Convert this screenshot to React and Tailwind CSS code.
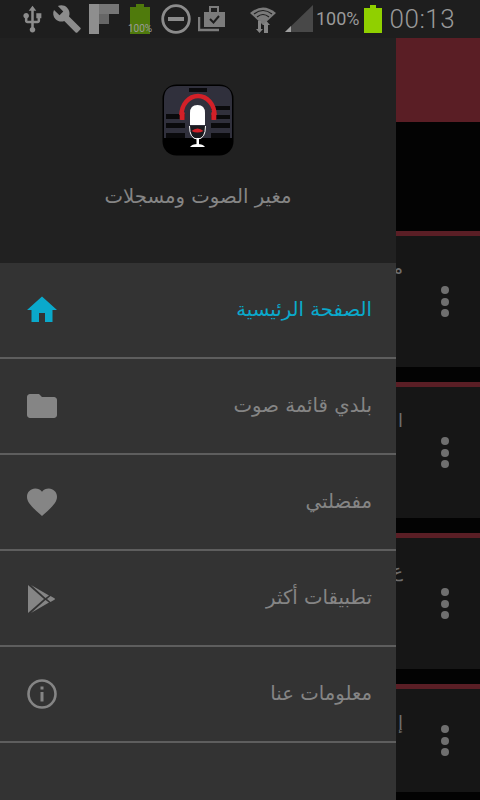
import React from "react";

const menuItems = [
  { label: "الصفحة الرئيسية", icon: "home", active: true },
  { label: "بلدي قائمة صوت", icon: "folder" },
  { label: "مفضلتي", icon: "heart" },
  { label: "تطبيقات أكثر", icon: "play" },
  { label: "معلومات عنا", icon: "info" },
];

const cards = [
  { glyph: "م", textClass: "mt-[19px]", height: "h-[131px]" },
  { glyph: "ا", textClass: "mt-[20px]", height: "h-[131px]" },
  { glyph: "ع", textClass: "mt-[19px]", height: "h-[131px]" },
  { glyph: "إ", textClass: "mt-[20px]", height: "h-[103px]" },
];

function MenuIcon({ name, active }) {
  const color = active ? "text-[#0aa9cb]" : "text-[#858585]";
  if (name === "play") {
    return (
      <svg width="30" height="32" viewBox="0 0 30 32" className={color} fill="currentColor">
        <path d="M1 3 L17 17 L1 31 Z" />
        <path d="M4 3 L22 13.5 L18.5 16 Z" />
        <path d="M4 31 L22 20.5 L18.5 18 Z" />
        <path d="M20 17 L23.5 14 L27 16 Q29 17 27 18 L23.5 20 Z" />
      </svg>
    );
  }
  if (name === "info") {
    return (
      <svg width="30" height="30" viewBox="0 0 30 30" className={color}>
        <circle cx="15" cy="15" r="13.5" fill="none" stroke="currentColor" strokeWidth="2.6" />
        <rect x="13.5" y="13" width="3" height="9.5" fill="currentColor" />
        <rect x="13.5" y="7.5" width="3" height="3" fill="currentColor" />
      </svg>
    );
  }
  const paths = {
    home: "M10 20v-6h4v6h5v-8h3L12 3 2 12h3v8z",
    folder: "M10 4H4c-1.1 0-2 .9-2 2v12c0 1.1.9 2 2 2h16c1.1 0 2-.9 2-2V8c0-1.1-.9-2-2-2h-8l-2-2z",
    heart:
      "M12 21.35l-1.45-1.32C5.4 15.36 2 12.28 2 8.5 2 5.42 4.42 3 7.5 3c1.74 0 3.41.81 4.5 2.09C13.09 3.81 14.76 3 16.5 3 19.58 3 22 5.42 22 8.5c0 3.78-3.4 6.86-8.55 11.54L12 21.35z",
  };
  return (
    <svg width="36" height="36" viewBox="0 0 24 24" className={`-mx-[3px] ${color}`} fill="currentColor">
      <path d={paths[name]} />
    </svg>
  );
}

function AppLogo() {
  return (
    <svg width="72" height="72" viewBox="0 0 72 72">
      <rect x="0.5" y="0.5" width="71" height="71" rx="14" fill="#000000" />
      <path d="M2 54 V15 Q2 2 15 2 H57 Q70 2 70 15 V54 Z" fill="#30303c" />
      <rect x="27" y="4" width="18" height="4" fill="#0a0a0c" />
      <g fill="#0a0a0c">
        <rect x="4" y="30" width="19" height="5" />
        <rect x="4" y="39" width="19" height="5" />
        <rect x="4" y="49" width="19" height="5" />
        <rect x="49" y="22" width="19" height="4" />
        <rect x="49" y="31" width="19" height="4" />
        <rect x="49" y="39" width="19" height="5" />
        <rect x="49" y="49" width="19" height="5" />
      </g>
      <path d="M19.5 31 A16.5 19 0 0 1 52.5 31" fill="none" stroke="#d32028" strokeWidth="4.4" />
      <rect x="17.7" y="28" width="5" height="8" rx="1" fill="#d32028" />
      <rect x="49.3" y="28" width="5" height="8" rx="1" fill="#d32028" />
      <path d="M28 41 V29 Q28 21 35.5 21 Q43 21 43 29 V41 Z" fill="#ffffff" />
      <path d="M27.5 42 Q27.5 55 35.5 55 Q43.5 55 43.5 42" fill="#1a1a1e" stroke="#ffffff" strokeWidth="1" />
      <path d="M29.5 47 Q35.5 42 41.5 47 Q35.5 50 29.5 47 Z" fill="#d32028" />
      <rect x="34.5" y="54" width="2.5" height="7" fill="#ffffff" />
      <path d="M28 63 Q30 60 35.5 60 Q41 60 43 63 Z" fill="#ffffff" />
    </svg>
  );
}

function StatusBar() {
  return (
    <div className="flex h-[38px] items-center bg-[#1e1e1e] pl-[23px]">
      <svg width="19" height="30" viewBox="4.5 0.8 15 21.5" fill="#8c8c8c">
        <path d="M15 7v4h1v2h-3V5h2l-3-4-3 4h2v8H8v-2.07c.7-.37 1.2-1.08 1.2-1.93 0-1.21-.99-2.2-2.2-2.2-1.21 0-2.2.99-2.2 2.2 0 .85.5 1.56 1.2 1.93V13c0 1.11.89 2 2 2h3v3.05c-.71.37-1.2 1.1-1.2 1.95 0 1.22.99 2.2 2.2 2.2 1.21 0 2.2-.98 2.2-2.2 0-.85-.49-1.58-1.2-1.95V15h3c1.11 0 2-.89 2-2v-2h1V7h-4z" />
      </svg>
      <svg width="30" height="30" viewBox="0 0 24 24" className="ml-[10px]" fill="#8c8c8c">
        <path d="M22.7 19l-9.1-9.1c.9-2.3.4-5-1.5-6.9-2-2-5-2.4-7.4-1.3L9 6 6 9 1.6 4.7C.4 7.1.9 10.1 2.9 12.1c1.9 1.9 4.6 2.4 6.9 1.5l9.1 9.1c.4.4 1 .4 1.4 0l2.3-2.3c.5-.4.5-1.1.1-1.4z" />
      </svg>
      <svg width="30" height="30" viewBox="0 0 30 30" className="ml-[7px]">
        <rect x="0" y="0" width="10" height="30" fill="#8e8e8e" />
        <rect x="10" y="0" width="20" height="10" fill="#767676" />
        <rect x="10" y="10" width="10" height="10" fill="#666666" />
      </svg>
      <div className="relative ml-[10px] h-[30px] w-[22px]">
        <svg width="22" height="30" viewBox="0 0 22 30">
          <rect x="7" y="0" width="8" height="3" fill="#4f7a0c" />
          <rect x="1" y="3" width="20" height="27" fill="#4f7a0c" />
        </svg>
        <span className="absolute bottom-0 left-[-3px] w-[28px] text-center font-['Roboto',sans-serif] text-[10px] leading-[11px] text-[#9a9a9a]">
          100%
        </span>
      </div>
      <svg width="30" height="30" viewBox="0 0 30 30" className="ml-[10px]">
        <circle cx="15" cy="15" r="13.3" fill="none" stroke="#8c8c8c" strokeWidth="2.8" />
        <rect x="7" y="13" width="16" height="4" fill="#8c8c8c" />
      </svg>
      <svg width="28" height="28" viewBox="0 0 28 28" className="ml-[7px]">
        <path d="M1 12 V25 H21" fill="none" stroke="#7c7c7c" strokeWidth="2.5" />
        <path d="M6 7 H27 V22 H6 Z" fill="#7c7c7c" />
        <path d="M12 7 V2 H20 V7" fill="none" stroke="#7c7c7c" strokeWidth="2" />
        <path d="M12 14 L15.5 17.5 L21 11" fill="none" stroke="#1e1e1e" strokeWidth="2" />
      </svg>
      <svg width="28" height="28" viewBox="0 0 28 28" className="ml-[23px]">
        <path d="M1 8 Q14 -3 27 8 L14 20 Z" fill="#7a7a7a" />
        <path d="M5 9 Q14 2 23 9 M8 12 Q14 7 20 12" fill="none" stroke="#1e1e1e" strokeWidth="1.2" />
        <path d="M9 28 V20 H7 L10.5 16 L14 20 H12 V28 Z" fill="#858585" transform="rotate(180 10.5 22)" />
        <path d="M15 28 V20 H13.5 L17.5 16 L21 20 H19 V28 Z" fill="#858585" />
      </svg>
      <svg width="28" height="28" viewBox="0 0 28 28" className="ml-[8px]">
        <path d="M28 0 V27 H0 Z" fill="#484848" />
        <path d="M6 21 V27 H0 Z" fill="#a0a0a0" />
      </svg>
      <span className="ml-[3px] font-['Roboto',sans-serif] text-[18px] leading-none text-[#9a9a9a]">100%</span>
      <svg width="18" height="28" viewBox="0 0 18 28" className="ml-[4px]">
        <rect x="6" y="0" width="6" height="3" fill="#90d000" />
        <rect x="0" y="3" width="18" height="25" fill="#90d000" />
      </svg>
      <span className="ml-[8px] font-['Roboto',sans-serif] text-[26px] font-light leading-none tracking-[0.5px] text-[#999999]">
        00:13
      </span>
    </div>
  );
}

function Drawer() {
  return (
    <div className="flex h-[762px] w-[396px] shrink-0 flex-col bg-[#333333]">
      <div className="flex h-[225px] flex-col items-center bg-[#212121] pt-[46px]">
        <AppLogo />
        <p dir="rtl" className="mt-[29px] font-['DejaVu_Sans',sans-serif] text-[19.7px] leading-[24px] text-[#858585]">
          مغير الصوت ومسجلات
        </p>
      </div>
      {menuItems.map((item) => (
        <div
          key={item.icon}
          className="flex h-[96px] shrink-0 items-center justify-between border-b-2 border-[#5e5e5e] pl-[27px] pr-[24px]"
        >
          <div className="flex w-[30px] justify-center">
            <MenuIcon name={item.icon} active={item.active} />
          </div>
          <span
            dir="rtl"
            className={`font-['DejaVu_Sans',sans-serif] text-[19.7px] ${item.active ? "text-[#0aa9cb]" : "text-[#858585]"}`}
          >
            {item.label}
          </span>
        </div>
      ))}
    </div>
  );
}

function BackgroundList() {
  return (
    <div className="flex h-[762px] flex-1 flex-col overflow-hidden bg-[#030303]">
      <div className="h-[84px] shrink-0 bg-[#5a1e25]" />
      <div className="h-[109px] shrink-0" />
      {cards.map((card) => (
        <div key={card.glyph} className="mb-[15px] shrink-0 border-t-[5px] border-[#5a1e25]">
          <div className={`relative flex items-center bg-[#161616] ${card.height}`}>
            <span
              dir="rtl"
              className={`absolute right-[77px] top-0 font-['DejaVu_Sans',sans-serif] text-[18px] text-[#6e6e6e] ${card.textClass}`}
            >
              {card.glyph}
            </span>
            <div className="ml-[45px] flex flex-col gap-[3.5px]">
              <span className="h-2 w-2 rounded-full bg-[#6f6f6f]" />
              <span className="h-2 w-2 rounded-full bg-[#6f6f6f]" />
              <span className="h-2 w-2 rounded-full bg-[#6f6f6f]" />
            </div>
          </div>
        </div>
      ))}
    </div>
  );
}

export default function App() {
  return (
    <div className="h-[800px] w-[480px] overflow-hidden bg-black">
      <StatusBar />
      <div className="flex">
        <Drawer />
        <BackgroundList />
      </div>
    </div>
  );
}
